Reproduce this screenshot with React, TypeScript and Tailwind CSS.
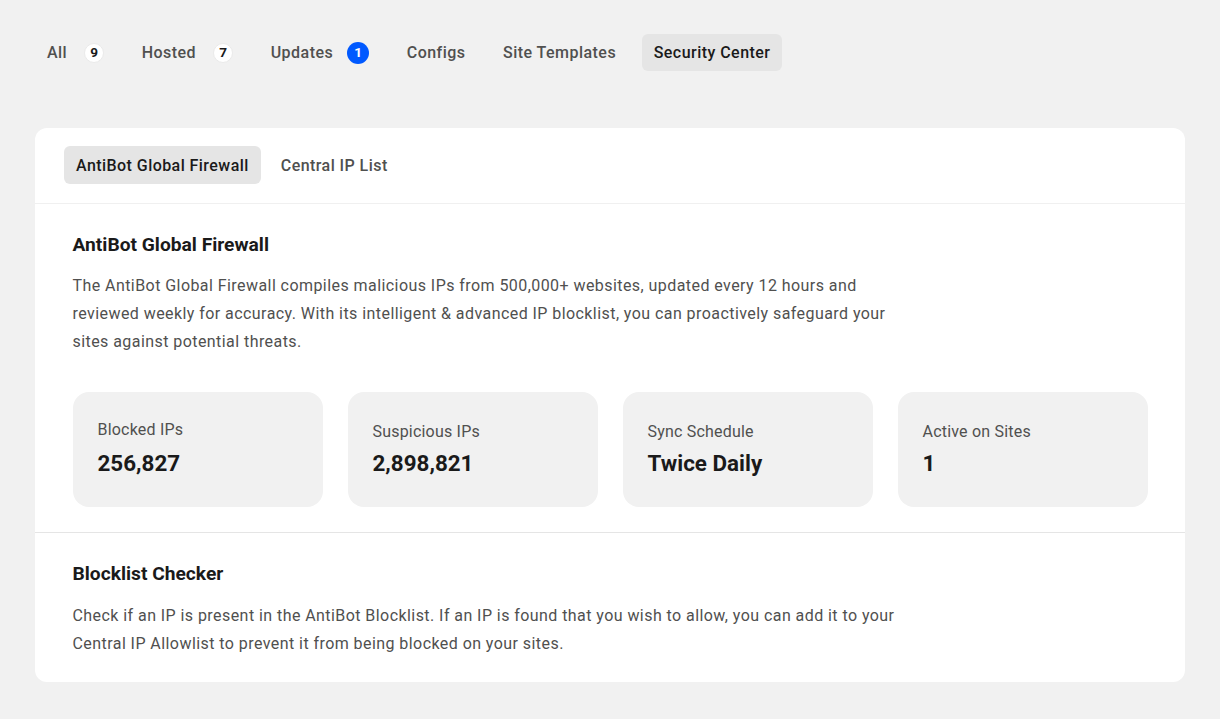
const topTabs = [
  { label: "All", count: "9" },
  { label: "Hosted", count: "7" },
  { label: "Updates", count: "1", blue: true },
  { label: "Configs" },
  { label: "Site Templates" },
  { label: "Security Center", active: true },
];

const stats = [
  { label: "Blocked IPs", value: "256,827", shift: true },
  { label: "Suspicious IPs", value: "2,898,821" },
  { label: "Sync Schedule", value: "Twice Daily" },
  { label: "Active on Sites", value: "1" },
];

export default function App() {
  return (
    <div className="min-h-[719px] bg-[#f1f1f1] px-[35px] pt-[34px] font-['Roboto',sans-serif] text-[#1a1a1a]">
      <nav className="flex items-center gap-[13.6px]">
        {topTabs.map((tab) => (
          <div
            key={tab.label}
            className={`flex h-[37px] items-center rounded-md px-3 text-base font-medium tracking-[0.46px] ${
              tab.active ? "bg-[#e5e5e5] text-[#1a1a1a]" : "text-[#50504f]"
            }`}
          >
            {tab.label}
            {tab.count && (
              <span
                className={`flex items-center justify-center rounded-full text-[13.6px] font-bold tracking-normal ${
                  tab.blue
                    ? "ml-[14px] h-[22px] w-[22px] bg-[#0059ff] text-white"
                    : "ml-[17px] h-5 w-5 border border-[#eaeaea] bg-white text-[#1a1a1a]"
                }`}
              >
                {tab.count}
              </span>
            )}
          </div>
        ))}
      </nav>

      <main className="mt-[57px] h-[554px] rounded-xl bg-white">
        <div className="flex h-[76px] items-start gap-2 border-b border-[#f0f0f0] pl-[29px] pt-[18px]">
          <div className="flex h-[38px] items-center rounded-md bg-[#e5e5e5] px-3 pt-px text-base font-medium tracking-[0.44px] text-[#1a1a1a]">
            AntiBot Global Firewall
          </div>
          <div className="flex h-[38px] items-center px-3 pt-px text-base font-medium tracking-[0.44px] text-[#50504f]">
            Central IP List
          </div>
        </div>

        <section className="h-[329px] border-b border-[#e5e5e5] pl-[37.5px] pr-[37px] pt-[28px]">
          <h2 className="text-[19.2px] font-bold leading-[26px]">AntiBot Global Firewall</h2>
          <p className="mt-[14px] w-[830px] text-base leading-7 tracking-[0.435px] text-[#50504f]">
            The AntiBot Global Firewall compiles malicious IPs from 500,000+ websites, updated every 12 hours and
            reviewed weekly for accuracy. With its intelligent &amp; advanced IP blocklist, you can proactively safeguard
            your sites against potential threats.
          </p>
          <div className="ml-[0.5px] mt-[36px] grid grid-cols-4 gap-[25px]">
            {stats.map((stat) => (
              <div
                key={stat.label}
                className={`h-[115px] rounded-2xl bg-[#f1f1f1] pl-[24.5px] ${stat.shift ? "pt-[27px]" : "pt-[29px]"}`}
              >
                <div className="text-base leading-[22px] tracking-[0.2px] text-[#50504f]">{stat.label}</div>
                <div className={`${stat.shift ? "mt-[6px]" : "mt-[4px]"} text-[22.4px] font-bold leading-8`}>
                  {stat.value}
                </div>
              </div>
            ))}
          </div>
        </section>

        <section className="pl-[37.5px] pt-[28px]">
          <h2 className="text-[19.2px] font-bold leading-[26px]">Blocklist Checker</h2>
          <p className="mt-[15px] w-[830px] text-base leading-7 tracking-[0.435px] text-[#50504f]">
            Check if an IP is present in the AntiBot Blocklist. If an IP is found that you wish to allow, you can add it
            to your Central IP Allowlist to prevent it from being blocked on your sites.
          </p>
        </section>
      </main>
    </div>
  );
}
